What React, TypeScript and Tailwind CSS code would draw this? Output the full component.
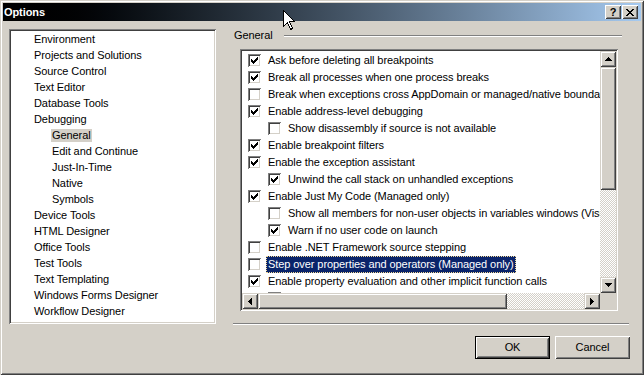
import React from "react";

const raised =
  "shadow-[inset_1px_1px_0_#ffffff,inset_-1px_-1px_0_#404040,inset_2px_2px_0_#d4d0c8,inset_-2px_-2px_0_#808080]";
const scrollRaised =
  "shadow-[inset_1px_1px_0_#d4d0c8,inset_-1px_-1px_0_#404040,inset_2px_2px_0_#ffffff,inset_-2px_-2px_0_#808080]";
const sunken =
  "shadow-[inset_1px_1px_0_#808080,inset_-1px_-1px_0_#ffffff,inset_2px_2px_0_#404040,inset_-2px_-2px_0_#d4d0c8]";
const frame =
  "shadow-[inset_1px_1px_0_#d4d0c8,inset_-1px_-1px_0_#404040,inset_2px_2px_0_#ffffff,inset_-2px_-2px_0_#808080]";
const dither =
  "bg-[repeating-conic-gradient(#d4d0c8_0_25%,#ffffff_0_50%)] bg-[length:2px_2px]";

const treeItems: [string, number, boolean?][] = [
  ["Environment", 0],
  ["Projects and Solutions", 0],
  ["Source Control", 0],
  ["Text Editor", 0],
  ["Database Tools", 0],
  ["Debugging", 0],
  ["General", 1, true],
  ["Edit and Continue", 1],
  ["Just-In-Time", 1],
  ["Native", 1],
  ["Symbols", 1],
  ["Device Tools", 0],
  ["HTML Designer", 0],
  ["Office Tools", 0],
  ["Test Tools", 0],
  ["Text Templating", 0],
  ["Windows Forms Designer", 0],
  ["Workflow Designer", 0],
];

// label, checked, indented, selected
const options: [string, boolean, boolean, boolean?][] = [
  ["Ask before deleting all breakpoints", true, false],
  ["Break all processes when one process breaks", true, false],
  ["Break when exceptions cross AppDomain or managed/native boundaries", false, false],
  ["Enable address-level debugging", true, false],
  ["Show disassembly if source is not available", false, true],
  ["Enable breakpoint filters", true, false],
  ["Enable the exception assistant", true, false],
  ["Unwind the call stack on unhandled exceptions", true, true],
  ["Enable Just My Code (Managed only)", true, false],
  ["Show all members for non-user objects in variables windows (Visual Basic only)", false, true],
  ["Warn if no user code on launch", true, true],
  ["Enable .NET Framework source stepping", false, false],
  ["Step over properties and operators (Managed only)", false, false, true],
  ["Enable property evaluation and other implicit function calls", true, false],
  ["Call string conversion function on objects in variables windows", true, true],
];

function Pixels({ w, h, d }: { w: number; h: number; d: string }) {
  return (
    <svg width={w} height={h} viewBox={`0 0 ${w} ${h}`} shapeRendering="crispEdges" className="block">
      <path d={d} fill="#000" />
    </svg>
  );
}

const checkD =
  "M6 0h1v1h-1z M5 1h2v1h-2z M0 2h1v1h-1z M4 2h3v1h-3z M0 3h2v1h-2z M3 3h3v1h-3z M0 4h5v1h-5z M1 5h3v1h-3z M2 6h1v1h-1z";
const upD = "M3 0h1v1h-1z M2 1h3v1h-3z M1 2h5v1h-5z M0 3h7v1h-7z";
const downD = "M0 0h7v1h-7z M1 1h5v1h-5z M2 2h3v1h-3z M3 3h1v1h-1z";
const leftD = "M0 3h1v1h-1z M1 2h1v3h-1z M2 1h1v5h-1z M3 0h1v7h-1z";
const rightD = "M0 0h1v7h-1z M1 1h1v5h-1z M2 2h1v3h-1z M3 3h1v1h-1z";
const closeD =
  "M0 0h2v1h-2z M6 0h2v1h-2z M1 1h2v1h-2z M5 1h2v1h-2z M2 2h4v1h-4z M3 3h2v1h-2z M2 4h4v1h-4z M1 5h2v1h-2z M5 5h2v1h-2z M0 6h2v1h-2z M6 6h2v1h-2z";

function Checkbox({ checked }: { checked: boolean }) {
  return (
    <div className={`w-[13px] h-[13px] shrink-0 bg-white flex items-center justify-center ${sunken}`}>
      {checked && <Pixels w={7} h={7} d={checkD} />}
    </div>
  );
}

function ScrollButton({ d, w, h }: { d: string; w: number; h: number }) {
  return (
    <div className={`w-[16px] h-[16px] shrink-0 bg-[#d4d0c8] flex items-center justify-center ${scrollRaised}`}>
      <Pixels w={w} h={h} d={d} />
    </div>
  );
}

export default function App() {
  return (
    <div
      className={`relative w-[644px] h-[375px] p-[3px] bg-[#d4d0c8] overflow-hidden text-[11px] tracking-[-0.08px] text-black font-['Liberation_Sans',Arial,sans-serif] ${frame}`}
    >
      {/* title bar */}
      <div className="h-[18px] flex items-center pl-[1px] pr-[3px] bg-linear-to-r from-[#000000] to-[#a6caf0]">
        <span className="font-bold text-white">Options</span>
        <div className="ml-auto flex gap-[1px]">
          <div className={`w-[16px] h-[14px] bg-[#d4d0c8] flex items-center justify-center font-bold leading-none ${raised}`}>
            ?
          </div>
          <div className={`w-[16px] h-[14px] bg-[#d4d0c8] flex items-center justify-center ${raised}`}>
            <Pixels w={8} h={7} d={closeD} />
          </div>
        </div>
      </div>

      <div className="flex pt-[8px] pl-[6px] gap-[17px]">
        {/* tree */}
        <div className={`w-[207px] h-[295px] p-[2px] bg-white ${sunken}`}>
          {treeItems.map(([label, level, sel]) => (
            <div key={label} className="h-[16px] flex items-center">
              <span
                className={`whitespace-nowrap leading-[13px] px-[1px] ${level ? "ml-[40px]" : "ml-[22px]"} ${
                  sel ? "bg-[#d4d0c8]" : ""
                }`}
              >
                {label}
              </span>
            </div>
          ))}
        </div>

        {/* right side */}
        <div className="w-[397px] flex flex-col">
          <div className="h-[13px] flex items-center">
            <span className="pl-[1px] leading-[13px]">General</span>
            <div className="flex-1 ml-[11px] mr-[8px] h-[2px] border-t border-t-[#808080] border-b border-b-white" />
          </div>

          <div className={`mt-[7px] ml-[7px] w-[378px] h-[262px] p-[2px] bg-white flex flex-col ${sunken}`}>
            <div className="flex h-[242px]">
              <div className="w-[358px] overflow-hidden pt-[1px]">
                {options.map(([label, checked, indent, sel]) => (
                  <div
                    key={label}
                    className={`h-[17px] flex items-center ${indent ? "pl-[26px]" : "pl-[6px]"}`}
                  >
                    <Checkbox checked={checked} />
                    <span
                      className={`ml-[5px] px-[2px] h-[17px] leading-[17px] whitespace-nowrap ${
                        sel
                          ? "bg-[#0a246a] text-white outline-1 outline-dotted outline-[#f5db95] -outline-offset-1"
                          : ""
                      }`}
                    >
                      {label}
                    </span>
                  </div>
                ))}
              </div>
              <div className="w-[16px] flex flex-col">
                <ScrollButton w={7} h={4} d={upD} />
                <div className={`h-[123px] bg-[#d4d0c8] ${scrollRaised}`} />
                <div className={`flex-1 ${dither}`} />
                <ScrollButton w={7} h={4} d={downD} />
              </div>
            </div>
            <div className="flex h-[16px]">
              <div className="w-[358px] flex">
                <ScrollButton w={4} h={7} d={leftD} />
                <div className={`w-[249px] bg-[#d4d0c8] ${scrollRaised}`} />
                <div className={`flex-1 ${dither}`} />
                <ScrollButton w={4} h={7} d={rightD} />
              </div>
              <div className="w-[16px] bg-[#d4d0c8]" />
            </div>
          </div>

          <div className="mt-[12px] w-[396px] h-[2px] border-t border-t-[#808080] border-b border-b-white" />

          <div className="mt-[11px] flex justify-end gap-[5px]">
            <div className="w-[75px] h-[23px] border border-black">
              <div className={`w-full h-full bg-[#d4d0c8] flex items-center justify-center ${raised}`}>OK</div>
            </div>
            <div className={`w-[75px] h-[23px] bg-[#d4d0c8] flex items-center justify-center ${raised}`}>
              Cancel
            </div>
          </div>
        </div>
      </div>

      {/* mouse pointer */}
      <svg className="absolute left-[283px] top-[10px]" width="13" height="21" viewBox="0 0 13 21" shapeRendering="crispEdges">
        <path
          d="M0.5 0.5 L0.5 16.5 L4.5 12.5 L7.5 19.5 L9.5 18.5 L6.5 11.5 L11.5 11.5 Z"
          fill="#fff"
          stroke="#000"
          strokeWidth="1"
        />
      </svg>
    </div>
  );
}
